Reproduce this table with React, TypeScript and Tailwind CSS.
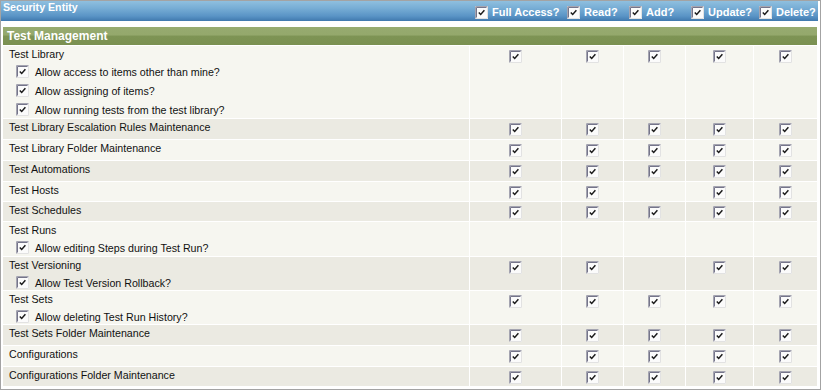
import React from "react";

function Cb() {
  return (
    <svg width="13" height="13" viewBox="0 0 13 13" className="block shrink-0">
      <rect x="0" y="0" width="13" height="13" fill="#fbfbfb" />
      <path d="M12.5 0.5V12.5H0.5" stroke="#e2e2e2" fill="none" />
      <path d="M0.5 12.5V0.5H12.5" stroke="#a4a4b0" fill="none" />
      <path d="M1.5 11.5V1.5H11.5" stroke="#75758a" fill="none" />
      <path d="M3.8 6.4 L5.7 8.4 L9.4 4.3" stroke="#1a1a1a" strokeWidth="1.5" fill="none" />
    </svg>
  );
}

type Row = {
  name: string;
  subs?: string[];
  cols: boolean[];
  h: string;
};

const ALL = [true, true, true, true, true];
const NONE = [false, false, false, false, false];
const NOADD = [true, true, false, true, true];

const rows: Row[] = [
  {
    name: "Test Library",
    subs: [
      "Allow access to items other than mine?",
      "Allow assigning of items?",
      "Allow running tests from the test library?",
    ],
    cols: ALL,
    h: "h-[72px]",
  },
  { name: "Test Library Escalation Rules Maintenance", cols: ALL, h: "h-[20px]" },
  { name: "Test Library Folder Maintenance", cols: ALL, h: "h-[20px]" },
  { name: "Test Automations", cols: ALL, h: "h-[20px]" },
  { name: "Test Hosts", cols: NOADD, h: "h-[19px]" },
  { name: "Test Schedules", cols: ALL, h: "h-[19px]" },
  { name: "Test Runs", subs: ["Allow editing Steps during Test Run?"], cols: NONE, h: "h-[34px]" },
  { name: "Test Versioning", subs: ["Allow Test Version Rollback?"], cols: NOADD, h: "h-[33px]" },
  { name: "Test Sets", subs: ["Allow deleting Test Run History?"], cols: ALL, h: "h-[33px]" },
  { name: "Test Sets Folder Maintenance", cols: ALL, h: "h-[20px]" },
  { name: "Configurations", cols: ALL, h: "h-[20px]" },
  { name: "Configurations Folder Maintenance", cols: ALL, h: "h-[19px]" },
];

const headers = ["Full Access?", "Read?", "Add?", "Update?", "Delete?"];

export default function App() {
  return (
    <div className="w-[822px] h-[391px] bg-white font-['Liberation_Sans',Arial,sans-serif] text-[#111]">
      <div className="w-[821px] h-[390px] border border-[#a3a3a3] bg-white overflow-hidden">
        {/* Header */}
        <div className="w-[817px] h-[20px] bg-[linear-gradient(to_bottom,#8fbfdf_0%,#78aed5_35%,#5a94c6_75%,#4079ae_100%)] grid grid-cols-[468px_92px_62px_62px_68px_65px] text-white font-bold">
          <div className="pl-[2px] text-[10.67px] leading-[13px]">Security Entity</div>
          {headers.map((h) => (
            <div key={h} className="flex items-center gap-[4px] pl-[6px] pt-[3px] text-[11px] leading-[13px] whitespace-nowrap">
              <Cb />
              <span>{h}</span>
            </div>
          ))}
        </div>

        {/* Section */}
        <div className="mt-[6px] ml-[2px] w-[814px] flex flex-col gap-px">
          <div className="h-[18px] bg-[linear-gradient(to_bottom,#97ab70_0%,#94a86c_45%,#7e9455_50%,#7a9051_100%)] flex items-center pl-[4px] text-white font-bold text-[12px] leading-[14px]">
            Test Management
          </div>
          {rows.map((r, i) => (
            <div
              key={r.name}
              className={`${r.h} grid grid-cols-[466px_91px_61px_61px_67px_63px] gap-x-px overflow-hidden`}
            >
              <div className={i % 2 === 0 ? "bg-[#f6f6f0]" : "bg-[#ebeae2]"}>
                <div className="pl-[6px] pt-[1px] text-[10.67px] leading-[14px]">{r.name}</div>
                {r.subs && (
                  <div className="mt-[1px] flex flex-col">
                    {r.subs.map((s) => (
                      <div key={s} className="h-[19px] flex items-center gap-[6px] pl-[13px] text-[10.67px] leading-[14px]">
                        <Cb />
                        <span>{s}</span>
                      </div>
                    ))}
                  </div>
                )}
              </div>
              {r.cols.map((c, j) => (
                <div
                  key={j}
                  className={`${i % 2 === 0 ? "bg-[#f6f6f0]" : "bg-[#ebeae2]"} flex justify-center pt-[4px]`}
                >
                  {c && <Cb />}
                </div>
              ))}
            </div>
          ))}
        </div>
      </div>
    </div>
  );
}
